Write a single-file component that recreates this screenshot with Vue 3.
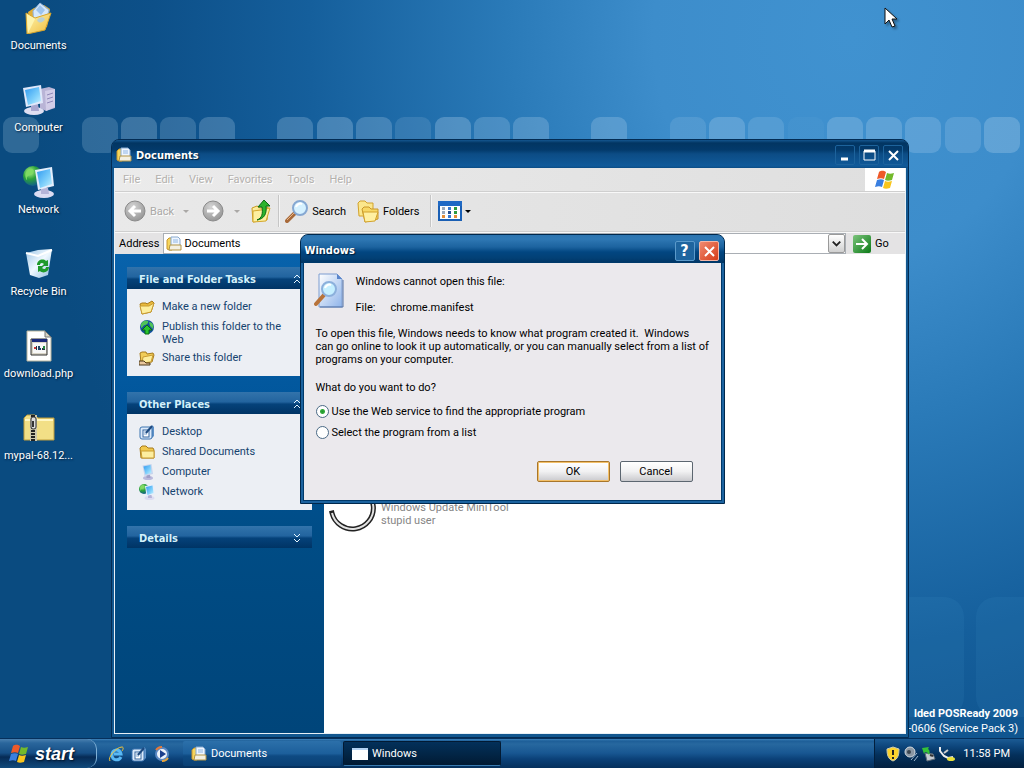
<script setup>
import { ref } from "vue";

//桌面图标
const shortcuts = [
  { icon: "docs", name: "Documents" },
  { icon: "computer", name: "Computer" },
  { icon: "network", name: "Network" },
  { icon: "bin", name: "Recycle Bin" },
  { icon: "php", name: "download.php" },
  { icon: "zip", name: "mypal-68.12..." },
];

const menus = ["File", "Edit", "View", "Favorites", "Tools", "Help"];

const groups = [
  {
    title: "File and Folder Tasks",
    open: true,
    items: [
      { icon: "newfolder", text: "Make a new folder" },
      { icon: "publish", text: "Publish this folder to the Web" },
      { icon: "share", text: "Share this folder" },
    ],
  },
  {
    title: "Other Places",
    open: true,
    items: [
      { icon: "desk", text: "Desktop" },
      { icon: "folder", text: "Shared Documents" },
      { icon: "pc", text: "Computer" },
      { icon: "network", text: "Network" },
    ],
  },
  { title: "Details", open: false, items: [] },
];

//壁纸方块 [x, 透明度]
const tiles = [
  [3, 0.2], [82, 0.2], [121, 0.26], [160, 0.2], [199, 0.24], [277, 0.24],
  [317, 0.28], [356, 0.24], [395, 0.14], [435, 0.28], [474, 0.22], [513, 0.24],
  [591, 0.24], [670, 0.14], [709, 0.24], [748, 0.16], [788, 0.04], [827, 0.24],
  [866, 0.24], [905, 0.22], [945, 0.18], [984, 0.26],
];

const address = ref("Documents");
const choice = ref("web");
</script>

<template>
  <div class="screen">
    <!--图标定义-->
    <svg class="defs" aria-hidden="true">
      <defs>
        <linearGradient id="gScreen" x1="0" y1="0" x2="1" y2="1">
          <stop offset="0" stop-color="#2f9af0" />
          <stop offset="0.6" stop-color="#7fd0fb" />
          <stop offset="1" stop-color="#c8f2ff" />
        </linearGradient>
        <linearGradient id="gFolder" x1="0" y1="0" x2="1" y2="1">
          <stop offset="0" stop-color="#fff6b0" />
          <stop offset="1" stop-color="#eebb3c" />
        </linearGradient>
        <linearGradient id="gBin" x1="0" y1="0" x2="1" y2="1">
          <stop offset="0" stop-color="#9cc4e6" />
          <stop offset="0.5" stop-color="#f0f9ff" />
          <stop offset="1" stop-color="#8db9de" />
        </linearGradient>
        <radialGradient id="gGlobe" cx="0.35" cy="0.3" r="0.8">
          <stop offset="0" stop-color="#b5f28c" />
          <stop offset="0.45" stop-color="#2ba33a" />
          <stop offset="1" stop-color="#0c4f9c" />
        </radialGradient>
        <radialGradient id="gBall" cx="0.4" cy="0.3" r="0.8">
          <stop offset="0" stop-color="#d5d5d5" />
          <stop offset="1" stop-color="#8f8f8f" />
        </radialGradient>
        <linearGradient id="gGo" x1="0" y1="0" x2="1" y2="1">
          <stop offset="0" stop-color="#7cc47c" />
          <stop offset="1" stop-color="#0b7a16" />
        </linearGradient>
        <linearGradient id="gPage" x1="0" y1="0" x2="1" y2="1">
          <stop offset="0" stop-color="#ffffff" />
          <stop offset="1" stop-color="#8fb4ea" />
        </linearGradient>
      </defs>

      <symbol id="i-docs" viewBox="0 0 32 32">
        <path d="M5 10l6-4 10-3 6 4-3 18-16 4z" fill="#e2ad35" />
        <path d="M10 9l7-8 9 7-4 16-11 3z" fill="#d6e8fb" stroke="#8fb3dc" />
        <path d="M13 8l4-5 5 5-4 5z" fill="#9cc3ee" />
        <path d="M3 11l9 5 16-5-6 17-18 4z" fill="url(#gFolder)" stroke="#d9a62c" />
        <path d="M4 12l1 19 7-14z" fill="#fdf4ae" />
        <path d="M14 18c2-3 6-4 8-1-2 4-6 5-8 1z" fill="#a9cdec" opacity="0.8" />
      </symbol>
      <symbol id="i-computer" viewBox="0 0 32 32">
        <path d="M17 5l9-2 6 2v19l-9 3-6-3z" fill="#b9b4d6" />
        <path d="M22 7l10-2v18l-9 4z" fill="#d2cde8" />
        <path d="M24 11l6-2M24 15l6-2M24 19l6-2" stroke="#8f88b8" />
        <ellipse cx="11" cy="27" rx="10" ry="4" fill="#dfdff2" />
        <path d="M8 20h7l1 7H8z" fill="#a8a7d0" />
        <path d="M0 4l18-3 2 18-17 4z" fill="#dfe8fa" />
        <path d="M2 6l14-3 2 14-13 4z" fill="url(#gScreen)" />
      </symbol>
      <symbol id="i-network" viewBox="0 0 32 32">
        <circle cx="10" cy="10" r="10" fill="url(#gGlobe)" />
        <path d="M5 4c4-3 7 0 5 3s-7 2-6 6-5-5 1-9z" fill="#7fdc62" />
        <ellipse cx="21" cy="28" rx="10" ry="4" fill="#dcdcf2" />
        <path d="M18 22h7l1 6h-8z" fill="#b5b4d8" />
        <path d="M12 4l17-3 2 19-16 4z" fill="#e4eefc" />
        <path d="M14 6l13-3 2 15-12 4z" fill="url(#gScreen)" />
      </symbol>
      <symbol id="i-pc" viewBox="0 0 32 32">
        <ellipse cx="18" cy="28" rx="10" ry="4" fill="#b9b9dc" />
        <path d="M15 21h7l1 7h-8z" fill="#9f9fc8" />
        <path d="M7 3l18-3 3 20-17 4z" fill="#c5d4ee" />
        <path d="M9 5l14-3 2 16-12 3z" fill="url(#gScreen)" />
      </symbol>
      <symbol id="i-bin" viewBox="0 0 32 32">
        <path d="M3 5l12-3 14-1-4 26-9 3-9-3z" fill="url(#gBin)" />
        <path d="M3 5l12 3 14-6" fill="none" stroke="#fff" stroke-width="2" />
        <path d="M14 17c0-5 6-7 9-4l2-1v6h-6l2-2c-2-2-4-1-4 1z" fill="#1f9a2a" />
        <path d="M26 19c0 5-6 7-9 4l-2 1v-6h6l-2 2c2 2 4 1 4-1z" fill="#1f9a2a" />
      </symbol>
      <symbol id="i-php" viewBox="0 0 32 32">
        <path d="M4 1h18l6 6v24H4z" fill="#fff" stroke="#b7b39b" />
        <path d="M22 1v6h6z" fill="#d7d4c4" stroke="#777" />
        <path d="M8 9h16v16H8z" fill="#d9d5c8" stroke="#333" />
        <path d="M9 9h15v3H9z" fill="#1a2a7c" />
        <path d="M10 13h13v10H10z" fill="#f8f8f8" />
        <path d="M11 17h2v2h-2z" fill="#c33" />
        <path d="M13 16h1v4h-1zM19 18h3v2h-3z" fill="#234" />
        <path d="M15 16h2v2h1v2h-3z" fill="#246" />
        <path d="M20 16h2v3h-2z" fill="#284" />
      </symbol>
      <symbol id="i-zip" viewBox="0 0 32 32">
        <path d="M1 6l3-3h8l3 3h16v22H1z" fill="#f2df86" stroke="#bd9c3c" />
        <path d="M2 8h28" stroke="#fff7c4" stroke-width="2" />
        <path d="M7 3h7v26H7z" fill="#cfc9ad" />
        <path d="M10 3v26" stroke="#222" stroke-width="4" stroke-dasharray="2 1" />
        <rect x="8" y="5" width="5" height="12" rx="2" fill="#ddd" stroke="#333" />
        <path d="M10 9v6" stroke="#333" stroke-width="2" />
      </symbol>
      <symbol id="i-docwin" viewBox="0 0 16 16">
        <path d="M1 4l2-2h3v12H3l-2-1z" fill="#f6d55c" stroke="#c8962a" />
        <path d="M5 1h7l2 2v9H5z" fill="#eff6ff" stroke="#88a9cf" />
        <path d="M7 4h5M7 6h5" stroke="#8fb6e4" />
        <path d="M4 9h11v5H3z" fill="#f3f0e2" stroke="#b39544" />
      </symbol>
      <symbol id="i-folder" viewBox="0 0 16 16">
        <path d="M1 4l2-2h4l2 2h5l1 2v8H2z" fill="#f1c94e" stroke="#a77b1c" />
        <path d="M2 7h13v7H3z" fill="#fdeea0" stroke="#c99c32" />
      </symbol>
      <symbol id="i-newfolder" viewBox="0 0 16 16">
        <path d="M1 5l2-1h4l1 1 5-3 2 2-3 9-9 2z" fill="#e8b93c" stroke="#a77b1c" />
        <path d="M1 7h9l5-3-3 9-9 2z" fill="#fdee9c" stroke="#c99c32" />
      </symbol>
      <symbol id="i-publish" viewBox="0 0 16 16">
        <circle cx="8" cy="8" r="7" fill="#12509e" />
        <path d="M2 5c2-4 6-4 7-3s-1 4-3 4-2 3-4 3z" fill="#4fc457" />
        <path d="M10 3c4 0 5 4 4 7l-3-3z" fill="#4fc457" />
        <path d="M8 6l5 5h-3v4H6v-4H3z" fill="#29c52e" stroke="#0a6a12" />
      </symbol>
      <symbol id="i-share" viewBox="0 0 16 16">
        <path d="M1 3l2-1h4l1 2 6-1 1 2-2 7-11 1z" fill="#f1cd58" stroke="#a77b1c" />
        <path d="M4 7l10-2-2 7-9 1z" fill="#fdee9c" stroke="#c99c32" />
        <path d="M0 11h5l2 2h4v2H0z" fill="#e9c79d" stroke="#4c3a1a" />
      </symbol>
      <symbol id="i-desk" viewBox="0 0 16 16">
        <path d="M13 1l2 2v9l-3 3z" fill="#5f92c8" />
        <rect x="1" y="3" width="12" height="12" rx="2" fill="#dceafa" stroke="#3d74b0" />
        <rect x="4" y="6" width="6" height="7" fill="#fff" stroke="#35679f" />
        <path d="M5 8h3M5 10h3" stroke="#7ba4d2" />
        <path d="M7 9l6-7" stroke="#1d4a80" stroke-width="2" />
      </symbol>
      <symbol id="i-flag" viewBox="0 0 20 20">
        <path d="M4 2c3-2 5-1 7 0L9 9C7 8 5 8 2 9z" fill="#ee5a2a" />
        <path d="M12 3c2 1 4 1 7 0l-2 7c-3 1-5 1-7 0z" fill="#73b92b" />
        <path d="M2 10c3-1 5-1 7 0l-2 7c-2-1-4-1-7 0z" fill="#3a7fe0" />
        <path d="M10 11c2 1 4 1 7 0l-2 7c-3 1-5 1-7 0z" fill="#f9c51c" />
      </symbol>
      <symbol id="i-back" viewBox="0 0 24 24">
        <circle cx="12" cy="12" r="10" fill="url(#gBall)" stroke="#8a8a8a" />
        <path d="M18 12H7M12 7l-5 5 5 5" fill="none" stroke="#fff" stroke-width="3" />
      </symbol>
      <symbol id="i-forward" viewBox="0 0 24 24">
        <circle cx="12" cy="12" r="10" fill="url(#gBall)" stroke="#8a8a8a" />
        <path d="M6 12h11M12 7l5 5-5 5" fill="none" stroke="#fff" stroke-width="3" />
      </symbol>
      <symbol id="i-up" viewBox="0 0 24 24">
        <path d="M3 9l5-2 3 2 8-1-1 13-14 2z" fill="url(#gFolder)" stroke="#c99a20" />
        <path d="M4 12l8-1 9-2-4 13-13 1z" fill="#fdf0a0" stroke="#d4a82e" />
        <path d="M8 21c5-2 6-6 5-13H9l6-7 6 6h-4c1 8-2 13-9 14z" fill="#2bb32c" stroke="#0b6a12" />
      </symbol>
      <symbol id="i-search" viewBox="0 0 24 24">
        <path d="M10 14l-8 8" stroke="#a86a3a" stroke-width="4" stroke-linecap="round" />
        <path d="M9 14l-7 7" stroke="#e6b58a" />
        <circle cx="15" cy="9" r="7" fill="#d5f1ff" stroke="#86a8d2" stroke-width="2" />
        <path d="M11 8c1-3 4-4 6-3" fill="none" stroke="#fff" stroke-width="2" />
      </symbol>
      <symbol id="i-folders" viewBox="0 0 24 24">
        <path d="M2 4l2-2h5l2 2h6v13H3z" fill="#fbe78c" stroke="#d2a22c" />
        <path d="M6 10l2-2h5l2 2h7v10l-13 3z" fill="#f7d865" stroke="#c8962a" />
        <path d="M7 13h15l-3 9-10 1z" fill="#fff0a2" stroke="#d2a22c" />
      </symbol>
      <symbol id="i-views" viewBox="0 0 24 20">
        <rect x="1" y="1" width="22" height="18" fill="#fff" stroke="#1a5fb4" stroke-width="2" />
        <path d="M0 0h24v5H0z" fill="#1f69c4" />
        <path d="M4 6h3v3H4zM4 10h3v3H4z" fill="#9aa9bb" />
        <path d="M4 14h3v3H4z" fill="#e58d35" />
        <path d="M10 6h3v3h-3zM10 14h3v3h-3z" fill="#3b7bd0" />
        <path d="M10 10h3v3h-3z" fill="#284f8f" />
        <path d="M16 6h3v3h-3zM16 10h3v3h-3z" fill="#2d9a3f" />
        <path d="M16 14h3v3h-3z" fill="#e58d35" />
      </symbol>
      <symbol id="i-find" viewBox="0 0 32 36">
        <path d="M5 1h18l5 5v28H5z" fill="url(#gPage)" stroke="#7c9cd0" />
        <path d="M6 34h23V7" fill="none" stroke="#5474a8" stroke-width="1" />
        <path d="M23 1v5h5z" fill="#5b86cc" />
        <path d="M10 22l-8 9" stroke="#b8733a" stroke-width="4" stroke-linecap="round" />
        <circle cx="15" cy="16" r="7" fill="#c5efff" stroke="#8cb0dc" stroke-width="2" />
        <path d="M11 15c1-3 4-4 6-3" fill="none" stroke="#fff" stroke-width="2" />
      </symbol>
      <symbol id="i-ie" viewBox="0 0 16 16">
        <path d="M13 11c-2 4-9 4-9-2s8-7 9-1H6" fill="none" stroke="#58b8f5" stroke-width="3" />
        <path d="M2 15C-1 12 8 1 14 1c2 0 1 3 0 4" fill="none" stroke="#f4c63a" stroke-width="1" />
      </symbol>
      <symbol id="i-wmp" viewBox="0 0 16 16">
        <circle cx="8" cy="8" r="6" fill="#eef3fb" stroke="#5a88c4" stroke-width="2" />
        <path d="M2 4a7 7 0 0 1 6-3" fill="none" stroke="#e27a3a" stroke-width="2" />
        <path d="M14 12a7 7 0 0 1-6 3" fill="none" stroke="#e6a23a" stroke-width="2" />
        <path d="M6 4l6 4-6 4z" fill="#1c3f8c" />
      </symbol>
      <symbol id="i-window" viewBox="0 0 16 16">
        <path d="M0 2h16v12H0z" fill="#fff" />
        <path d="M0 2h16v2H0z" fill="#b5d3f2" />
      </symbol>
      <symbol id="i-shield" viewBox="0 0 16 16">
        <path d="M8 1l6 2c0 6-1 10-6 12C3 13 2 9 2 3z" fill="#fbd22c" stroke="#c9c9b0" />
        <path d="M8 4v5M8 11v2" stroke="#222" stroke-width="2" />
      </symbol>
      <symbol id="i-sound" viewBox="0 0 16 16">
        <circle cx="7" cy="6" r="5" fill="#8b97a3" stroke="#d5dbe0" />
        <circle cx="6" cy="6" r="2" fill="#3c4650" />
        <path d="M8 14l6-7M11 15l4-5" fill="none" stroke="#9fb7cf" stroke-width="1" />
      </symbol>
      <symbol id="i-eject" viewBox="0 0 16 16">
        <path d="M4 7l8 1 2 5-8 2z" fill="#c5ccd2" stroke="#5e6c78" />
        <path d="M9 9l3 1" stroke="#333" stroke-width="2" />
        <path d="M1 2l7-1-1 2c2 1 2 4 1 6-1-2-2-3-4-3L3 8z" fill="#35c238" />
      </symbol>
      <symbol id="i-plug" viewBox="0 0 16 16">
        <path d="M1 1v4l4 5 4 2 5-1" fill="none" stroke="#eee" stroke-width="2" />
        <path d="M5 7l4-3" stroke="#ccc" stroke-width="2" />
        <ellipse cx="12" cy="13" rx="4" ry="2" fill="#e8e03a" />
      </symbol>
    </svg>

    <!--桌面-->
    <div class="desktop">
      <svg class="wallpaper" aria-hidden="true">
        <rect v-for="t in tiles" :key="t[0]" :x="t[0]" y="117" width="36" height="36" rx="9" fill="#c5dff4" :opacity="t[1]" />
        <rect x="880" y="597" width="84" height="120" rx="20" fill="#3d8ac4" opacity="0.15" />
        <rect x="976" y="597" width="84" height="120" rx="20" fill="#3d8ac4" opacity="0.15" />
      </svg>

      <div class="shortcuts">
        <a v-for="s in shortcuts" :key="s.name" href="#" class="shortcut">
          <svg class="ico32"><use :href="'#i-' + s.icon" /></svg>
          <span>{{ s.name }}</span>
        </a>
      </div>

      <div class="version">
        <strong>lded POSReady 2009</strong>
        <span>-0606 (Service Pack 3)</span>
      </div>

      <!--资源管理器窗口-->
      <section class="explorer">
        <header class="titlebar">
          <svg class="ico16"><use href="#i-docwin" /></svg>
          <h1>Documents</h1>
          <button class="winbtn" aria-label="Minimize">
            <svg viewBox="0 0 19 19"><path d="M5 13h7" stroke="#fff" stroke-width="3" /></svg>
          </button>
          <button class="winbtn" aria-label="Maximize">
            <svg viewBox="0 0 19 19"><path d="M4 5h11v9H4z" fill="none" stroke="#fff" /><path d="M4 5h11" stroke="#fff" stroke-width="3" /></svg>
          </button>
          <button class="winbtn" aria-label="Close">
            <svg viewBox="0 0 19 19"><path d="M5 5l9 9M14 5l-9 9" stroke="#fff" stroke-width="2" /></svg>
          </button>
        </header>

        <div class="frame">
          <nav class="menubar">
            <button v-for="m in menus" :key="m" disabled>{{ m }}</button>
            <span class="brand"><svg><use href="#i-flag" /></svg></span>
          </nav>

          <div class="toolbar">
            <button class="tool back" disabled>
              <svg class="ico24"><use href="#i-back" /></svg>
              Back
              <i class="caret"></i>
            </button>
            <button class="tool forward" disabled aria-label="Forward">
              <svg class="ico24"><use href="#i-forward" /></svg>
              <i class="caret"></i>
            </button>
            <button class="tool up" aria-label="Up">
              <svg class="ico24"><use href="#i-up" /></svg>
            </button>
            <span class="split"></span>
            <button class="tool search">
              <svg class="ico24"><use href="#i-search" /></svg>
              Search
            </button>
            <button class="tool folders">
              <svg class="ico24"><use href="#i-folders" /></svg>
              Folders
            </button>
            <span class="split"></span>
            <button class="tool views" aria-label="Views">
              <svg class="icoviews"><use href="#i-views" /></svg>
              <i class="caret"></i>
            </button>
          </div>

          <div class="addressbar">
            <label for="address">Address</label>
            <div class="field">
              <svg class="ico16"><use href="#i-docwin" /></svg>
              <input id="address" v-model="address" type="text" />
              <button class="drop" aria-label="Show addresses">
                <svg viewBox="0 0 16 18"><path d="M4 7l4 4 4-4" fill="none" stroke="#222" stroke-width="2" /></svg>
              </button>
            </div>
            <button class="go">
              <svg viewBox="0 0 18 18">
                <rect width="18" height="18" rx="2" fill="url(#gGo)" />
                <path d="M3 9h11M9 4l5 5-5 5" fill="none" stroke="#fff" stroke-width="2" />
              </svg>
              Go
            </button>
          </div>

          <div class="content">
            <aside class="sidebar">
              <section v-for="g in groups" :key="g.title" class="group">
                <h2>
                  {{ g.title }}
                  <svg viewBox="0 0 9 10">
                    <path v-if="g.open" d="M1 4l3-3 3 3M1 9l3-3 3 3" />
                    <path v-else d="M1 1l3 3 3-3M1 6l3 3 3-3" />
                  </svg>
                </h2>
                <ul v-if="g.open">
                  <li v-for="i in g.items" :key="i.text">
                    <a href="#">
                      <svg class="ico16"><use :href="'#i-' + i.icon" /></svg>
                      <span>{{ i.text }}</span>
                    </a>
                  </li>
                </ul>
              </section>
            </aside>
            <main class="files">
              <div class="file">
                <svg class="ico48" viewBox="0 0 48 48">
                  <path d="M3 28A21 21 0 1 0 24 2" fill="none" stroke="#222" stroke-width="5" stroke-linecap="square" />
                  <path d="M3 28A21 21 0 1 0 24 2" fill="none" stroke="#e2e2e2" stroke-width="2" />
                </svg>
                <p>Windows Update MiniTool<br />stupid user</p>
              </div>
            </main>
          </div>
        </div>
      </section>

      <!--对话框-->
      <div class="overlay">
        <form class="dialog" role="dialog" aria-labelledby="dlg-title" @submit.prevent>
          <header class="titlebar light">
            <h1 id="dlg-title">Windows</h1>
            <button type="button" class="winbtn help">?</button>
            <button type="button" class="winbtn close" aria-label="Close">
              <svg viewBox="0 0 19 19"><path d="M5 5l9 9M14 5l-9 9" stroke="#fff" stroke-width="2" /></svg>
            </button>
          </header>
          <div class="dlgbody">
            <div class="head">
              <svg class="icofind"><use href="#i-find" /></svg>
              <div>
                <p>Windows cannot open this file:</p>
                <p class="filename"><span>File:</span><span>chrome.manifest</span></p>
              </div>
            </div>
            <p class="explain">
              To open this file, Windows needs to know what program created it.&nbsp; Windows<br />
              can go online to look it up automatically, or you can manually select from a list of<br />
              programs on your computer.
            </p>
            <p class="ask">What do you want to do?</p>
            <label class="option"><input v-model="choice" type="radio" name="how" value="web" />Use the Web service to find the appropriate program</label>
            <label class="option"><input v-model="choice" type="radio" name="how" value="list" />Select the program from a list</label>
            <div class="actions">
              <button type="submit" class="btn default">OK</button>
              <button type="button" class="btn">Cancel</button>
            </div>
          </div>
        </form>
      </div>

      <svg class="cursor" viewBox="0 0 13 21" aria-hidden="true">
        <path d="M1 1v16l4-4 3 7 3-1-3-7h5z" fill="#fff" stroke="#111" />
      </svg>
    </div>

    <!--任务栏-->
    <footer class="taskbar">
      <button class="start">
        <svg><use href="#i-flag" /></svg>
        start
      </button>
      <div class="quick">
        <a href="#" aria-label="Internet Explorer"><svg class="ico16"><use href="#i-ie" /></svg></a>
        <a href="#" aria-label="Show Desktop"><svg class="ico16"><use href="#i-desk" /></svg></a>
        <a href="#" aria-label="Media Player"><svg class="ico16"><use href="#i-wmp" /></svg></a>
      </div>
      <div class="tasks">
        <button class="task"><svg class="ico16"><use href="#i-docwin" /></svg>Documents</button>
        <button class="task active"><svg class="ico16"><use href="#i-window" /></svg>Windows</button>
      </div>
      <div class="tray">
        <svg class="ico16"><use href="#i-shield" /></svg>
        <svg class="ico16"><use href="#i-sound" /></svg>
        <svg class="ico16"><use href="#i-eject" /></svg>
        <svg class="ico16"><use href="#i-plug" /></svg>
        <time>11:58 PM</time>
      </div>
    </footer>
  </div>
</template>

<style>
body {
  margin: 0;
  overflow: hidden;
}
</style>

<style scoped>
* {
  box-sizing: border-box;
}
.screen {
  height: 100vh;
  display: flex;
  flex-direction: column;
  font-family: Tahoma, Roboto, "Liberation Sans", sans-serif;
  font-size: 11px;
  line-height: 13px;
  color: #000;
}
.defs {
  position: absolute;
  width: 0;
  height: 0;
}
button,
input {
  margin: 0;
  padding: 0;
  border: 0;
  background: none;
  font: inherit;
  color: inherit;
}
a {
  color: inherit;
  text-decoration: none;
}
p,
h1,
h2,
ul {
  margin: 0;
  padding: 0;
  list-style: none;
}
h1,
h2 {
  font-family: Tahoma, "DejaVu Sans Condensed", "Liberation Sans", sans-serif;
  font-size: 11px;
  line-height: 13px;
  font-weight: bold;
}
svg {
  display: block;
  flex: none;
}
.ico16 {
  width: 16px;
  height: 16px;
}
.ico24 {
  width: 24px;
  height: 24px;
}
.ico32 {
  width: 32px;
  height: 32px;
}
.ico48 {
  width: 48px;
  height: 48px;
}

/*桌面*/
.desktop {
  position: relative;
  flex: 1;
  min-height: 0;
  background: radial-gradient(ellipse 80% 125% at 83% 5%, #4092d0 0%, #3d8dcb 24%, #2a7ab8 42%, #155f9c 66%, #0d5089 85%, #0a4b80 100%);
}
.wallpaper {
  position: absolute;
  width: 100%;
  height: 100%;
}
.shortcuts {
  position: relative;
  width: 77px;
  padding-top: 2px;
  display: flex;
  flex-direction: column;
}
.shortcut {
  height: 82px;
  display: flex;
  flex-direction: column;
  align-items: center;
  gap: 5px;
  color: #fff;
  white-space: nowrap;
  text-shadow: 1px 1px 2px #001c38;
}
.version {
  position: absolute;
  right: 6px;
  bottom: 3px;
  display: flex;
  flex-direction: column;
  align-items: flex-end;
  gap: 2px;
  color: #fff;
  white-space: nowrap;
}
.cursor {
  position: absolute;
  left: 884px;
  top: 7px;
  width: 13px;
  height: 21px;
  filter: drop-shadow(2px 2px 1px #0005);
}

/*窗口*/
.explorer {
  position: absolute;
  left: 111px;
  right: 115px;
  top: 139px;
  bottom: 0;
  display: flex;
  flex-direction: column;
  padding: 0 2px 3px;
  border: 1px solid #032c54;
  border-radius: 8px 8px 0 0;
  background: #12578f;
  overflow: hidden;
}
.titlebar {
  height: 28px;
  flex: none;
  display: flex;
  align-items: center;
  gap: 4px;
  margin: 0 -2px;
  padding: 2px 5px 0 4px;
  color: #fff;
  background: linear-gradient(#14568f 0, #023562 3px, #033a6b 10px, #0c4c85 14px, #105a9a 26px, #0b4b83 28px);
}
.titlebar h1 {
  flex: 1;
  text-shadow: 1px 1px 1px #001c38;
}
.titlebar.light {
  background: linear-gradient(#2d75b0 0, #2f78b4 4px, #1c639f 12px, #024681 17px, #024075 23px, #003463 28px);
}
.winbtn {
  width: 20px;
  height: 20px;
  border: 1px solid #1d639c;
  border-radius: 2px;
  display: grid;
  place-items: center;
}
.winbtn svg {
  width: 19px;
  height: 19px;
}
.winbtn.help {
  border-color: #5b9acb;
  background: #1f659f;
  font-family: Tahoma, "DejaVu Sans Condensed", sans-serif;
  font-size: 16px;
  font-weight: bold;
}
.winbtn.close {
  border-color: #f5b6a6;
  background: linear-gradient(135deg, #f08a70, #d63c18);
}
.frame {
  flex: 1;
  min-height: 0;
  display: flex;
  flex-direction: column;
  border: 1px solid #e8f0f6;
  border-top: 0;
  background: #e4e3e4;
}
.menubar {
  height: 24px;
  flex: none;
  display: flex;
  align-items: center;
  gap: 15px;
  padding-left: 8px;
  border-bottom: 1px solid #cfcfcf;
  background: linear-gradient(90deg, #ebebeb, #dfdfdf);
}
.menubar button:disabled {
  color: #b4b1ae;
  text-shadow: 1px 1px 0 #fff;
}
.brand {
  width: 40px;
  height: 23px;
  margin-left: auto;
  display: grid;
  place-items: center;
  background: #fff;
}
.brand svg {
  width: 20px;
  height: 20px;
}
.toolbar {
  height: 40px;
  flex: none;
  display: flex;
  align-items: center;
  padding: 0 0 2px 8px;
  border-top: 1px solid #f8f8f8;
  border-bottom: 1px solid #cfcfcf;
  background: linear-gradient(90deg, #e9e9e9, #dedede);
}
.tool {
  display: flex;
  align-items: center;
  gap: 3px;
}
.tool:disabled {
  color: #aaa8a6;
  text-shadow: 1px 1px 0 #fff;
}
.caret {
  border: 3px solid transparent;
  border-top-color: currentColor;
  border-bottom: 0;
}
.back .caret {
  margin-left: 6px;
}
.forward {
  margin-left: 12px;
  gap: 9px;
}
.up {
  margin-left: 9px;
}
.split {
  width: 1px;
  height: 32px;
  margin: 0 5px;
  background: #c6c6c6;
  box-shadow: 1px 0 0 #f5f5f5;
}
.search {
  margin-left: 1px;
}
.folders {
  margin-left: 10px;
  margin-right: 6px;
}
.views {
  margin-left: 2px;
}
.icoviews {
  width: 24px;
  height: 20px;
}
.addressbar {
  height: 22px;
  flex: none;
  display: flex;
  align-items: center;
  gap: 4px;
  padding-left: 4px;
  border-top: 1px solid #f8f8f8;
}
.field {
  flex: 1;
  height: 21px;
  display: flex;
  align-items: center;
  gap: 2px;
  padding-left: 2px;
  border: 1px solid #a9aeb4;
  background: #fff;
}
.field input {
  flex: 1;
  min-width: 0;
  outline: 0;
}
.drop {
  width: 17px;
  height: 19px;
  border: 1px solid #9a9a9a;
  border-radius: 2px;
  background: linear-gradient(#fff, #d0d0d0);
}
.go {
  width: 55px;
  display: flex;
  align-items: center;
  gap: 4px;
  padding-left: 3px;
}
.go svg {
  width: 18px;
  height: 18px;
}
.content {
  flex: 1;
  min-height: 0;
  display: flex;
}
.sidebar {
  width: 209px;
  flex: none;
  display: flex;
  flex-direction: column;
  gap: 16px;
  padding: 13px 12px;
  background: linear-gradient(#0862ab, #00559a 35%, #004c85 60%, #00457a);
}
.group h2 {
  height: 22px;
  display: flex;
  align-items: center;
  justify-content: space-between;
  padding: 2px 10px 0 12px;
  color: #d3f1fb;
  background: linear-gradient(#3273ab, #22649f 45%, #05427a 55%, #003465);
}
.group h2 svg {
  width: 9px;
  height: 10px;
  fill: none;
  stroke: #e6f6ff;
  stroke-width: 1;
}
.group ul {
  display: flex;
  flex-direction: column;
  gap: 4px;
  padding: 10px 12px;
  background: #eceff4;
}
.group a {
  display: flex;
  gap: 7px;
  color: #15436f;
}
.group a span {
  padding-top: 1px;
}
.files {
  flex: 1;
  padding: 231px 5px 0;
  background: #fff;
}
.file {
  display: flex;
  align-items: flex-end;
  gap: 4px;
  color: #868686;
}
.file p {
  padding-bottom: 6px;
}

/*对话框*/
.overlay {
  position: absolute;
  inset: 0;
  display: grid;
  place-items: center;
}
.dialog {
  width: 425px;
  padding: 0 3px 3px;
  border: 1px solid #00284c;
  border-radius: 8px 8px 0 0;
  background: #1c639f;
  overflow: hidden;
}
.dialog .titlebar {
  margin: 0 -3px;
  padding-top: 3px;
}
.dlgbody {
  padding: 10px 8px 18px 12px;
  background: #ebe9ed;
  outline: 1px solid #00396a;
}
.head {
  display: flex;
  gap: 10px;
}
.head > div {
  padding-top: 2px;
}
.icofind {
  width: 32px;
  height: 36px;
  margin-left: -2px;
}
.filename {
  display: flex;
  gap: 15px;
  margin-top: 13px;
}
.explain {
  margin-top: 13px;
}
.ask {
  margin: 15px 0 7px;
}
.option {
  display: flex;
  align-items: center;
  gap: 3px;
  height: 21px;
}
.option input {
  appearance: none;
  width: 13px;
  height: 13px;
  border: 1px solid #4b6a86;
  border-radius: 50%;
  background: #fff;
}
.option input:checked {
  background: radial-gradient(circle, #1f9a2a 0, #35a93c 2px, #fff 3px);
}
.actions {
  display: flex;
  justify-content: flex-end;
  gap: 10px;
  margin-top: 18px;
  padding-right: 20px;
}
.btn {
  width: 73px;
  height: 21px;
  border: 1px solid #5c6670;
  border-radius: 2px;
  background: linear-gradient(#fff, #f1f1f2 50%, #c9c9cd);
}
.btn.default {
  border-color: #a8762a;
  box-shadow: inset 0 0 0 1px #f3c069;
}

/*任务栏*/
.taskbar {
  height: 30px;
  flex: none;
  display: flex;
  align-items: stretch;
  color: #fff;
  border-top: 1px solid #06305c;
  background: linear-gradient(#3f83bb 0, #1d5e98 2px, #27689f 5px, #185792 14px, #0b4178 20px, #05305c 100%);
}
.start {
  width: 97px;
  display: flex;
  align-items: center;
  gap: 6px;
  padding-left: 9px;
  border-right: 1px solid #7fb0d6;
  border-radius: 0 10px 10px 0;
  background: linear-gradient(#4a80b0 0, #2a669c 4px, #164f86 14px, #062b55 18px, #114a7c 100%);
  font-family: "Liberation Sans", sans-serif;
  font-size: 18px;
  line-height: 20px;
  font-weight: bold;
  font-style: italic;
  text-shadow: 1px 1px 2px #001428;
}
.start svg {
  width: 20px;
  height: 20px;
}
.quick {
  width: 86px;
  display: flex;
  align-items: center;
  gap: 7px;
  padding-left: 11px;
}
.tasks {
  flex: 1;
  min-width: 0;
  display: flex;
  align-items: center;
  gap: 2px;
}
.task {
  width: 158px;
  height: 25px;
  display: flex;
  align-items: center;
  gap: 4px;
  padding-left: 8px;
  border-radius: 2px;
  background: linear-gradient(#2c70aa, #1c5f9b 50%, #0e4a82 60%, #0a4074);
}
.task.active {
  border: 1px solid #021a33;
  border-bottom-color: #3a7bb0;
  background: linear-gradient(#03305a, #022647 50%, #011a33);
}
.tray {
  display: flex;
  align-items: center;
  gap: 2px;
  padding: 0 14px 0 10px;
  border-left: 1px solid #021f3d;
  background: linear-gradient(#1b5b94 0, #0c447a 8px, #04305b 16px, #02203f 100%);
}
.tray time {
  margin-left: 6px;
}
</style>
